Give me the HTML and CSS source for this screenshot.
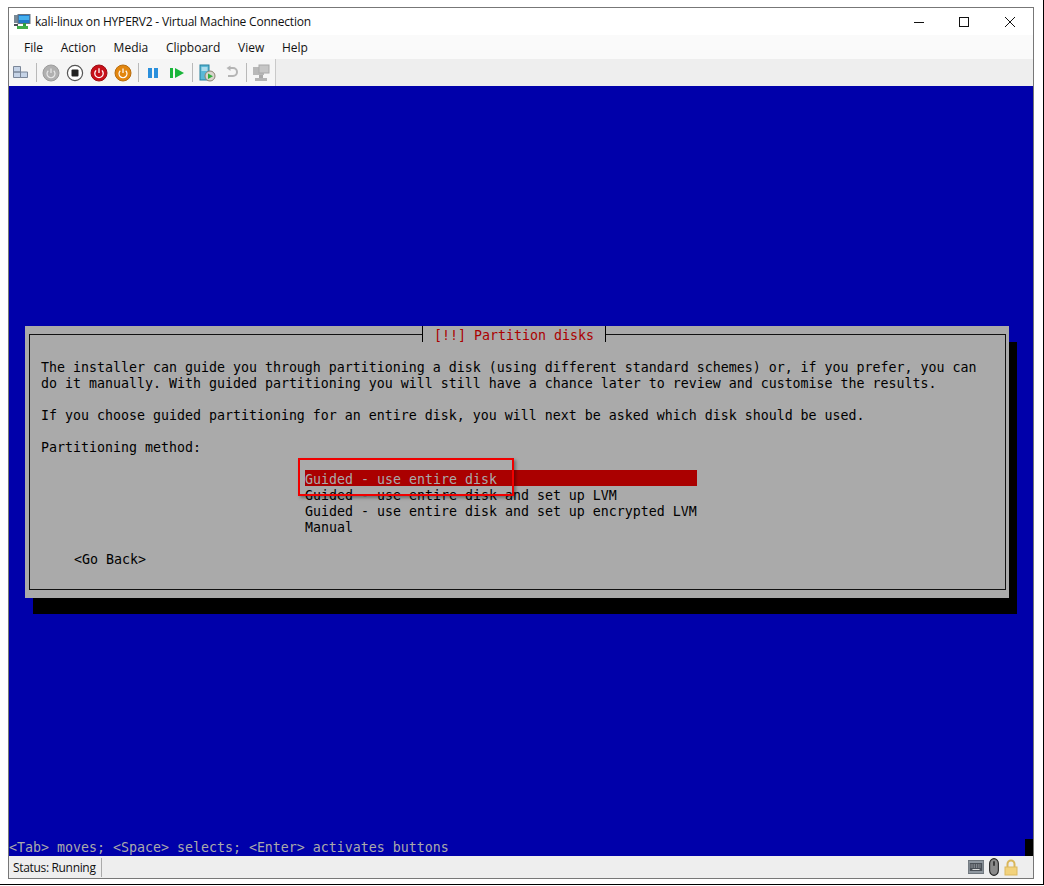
FILE: index.html
```html
<!DOCTYPE html>
<html lang="en">
<head>
<meta charset="utf-8">
<title>kali-linux on HYPERV2 - Virtual Machine Connection</title>
<link rel="stylesheet" href="styles.css">
</head>
<body>
<div class="window">
  <header class="titlebar">
    <svg class="app-icon" width="17" height="16" viewBox="0 0 17 16">
      <rect x="0" y="1" width="6" height="8" fill="#7a8a96"/>
      <rect x="4" y="0.5" width="12" height="9" fill="#1f78c8" stroke="#6c7680"/>
      <rect x="5" y="2" width="10" height="4" fill="#45b0ee"/>
      <rect x="9" y="9" width="3" height="3" fill="#2f9e3f"/>
      <rect x="3" y="12" width="11" height="3" fill="#3fae4a"/>
      <rect x="0" y="10" width="4" height="2" fill="#4a4f55"/>
    </svg>
    <span class="title">kali-linux on HYPERV2 - Virtual Machine Connection</span>
    <div class="controls">
      <svg class="minimize" width="10" height="10" viewBox="0 0 10 10"><path d="M0 5.5H10" stroke="#111" stroke-width="1"/></svg>
      <svg width="10" height="10" viewBox="0 0 10 10"><rect x="0.5" y="0.5" width="9" height="9" fill="none" stroke="#111"/></svg>
      <svg width="10" height="10" viewBox="0 0 10 10"><path d="M0 0L10 10M10 0L0 10" stroke="#111" stroke-width="1"/></svg>
    </div>
  </header>
  <nav class="menubar">
    <span>File</span><span>Action</span><span>Media</span><span>Clipboard</span><span>View</span><span>Help</span>
  </nav>
  <div class="toolstrip">
    <div class="tools">
      <svg class="tool" viewBox="0 0 18 18"><path d="M1.5 2.5h7v5.5h-7zM1.5 8h7v5.5h-7zM8.5 8h7v5.5h-7z" fill="#c5d3e6" stroke="#7b8698"/></svg>
      <i class="sep"></i>
      <svg class="tool" viewBox="0 0 18 18"><circle cx="9" cy="9" r="8" fill="#b0b0b0" stroke="#9c9c9c"/><path d="M6.3 6.8a4 4 0 1 0 5.4 0M9 4.5v4.5" fill="none" stroke="#e8e8e8" stroke-width="1.2"/></svg>
      <svg class="tool" viewBox="0 0 18 18"><circle cx="9" cy="9" r="7.6" fill="#fff" stroke="#555" stroke-width="1.2"/><rect x="5.5" y="5.5" width="7" height="7" rx="1" fill="#222"/></svg>
      <svg class="tool" viewBox="0 0 18 18"><circle cx="9" cy="9" r="8" fill="#c8101a" stroke="#9c1016"/><path d="M6.1 6.4a4.2 4.2 0 1 0 5.8 0M9 4.2v4.8" fill="none" stroke="#fff" stroke-width="1.3"/></svg>
      <svg class="tool" viewBox="0 0 18 18"><circle cx="9" cy="9" r="8" fill="#e2860f" stroke="#b86c0c"/><path d="M6.3 6.8a4 4 0 1 0 5.4 0M9 4.5v4.5" fill="none" stroke="#fff" stroke-width="1.2"/></svg>
      <i class="sep"></i>
      <svg class="tool" viewBox="0 0 18 18"><rect x="4" y="4" width="4" height="10" fill="#2a8fdc"/><rect x="10" y="4" width="4" height="10" fill="#2a8fdc"/></svg>
      <svg class="tool" viewBox="0 0 18 18"><rect x="2" y="4" width="3" height="10" fill="#19b53a"/><path d="M7 4l9 5-9 5z" fill="#19b53a"/></svg>
      <i class="sep"></i>
      <svg class="tool" viewBox="0 0 18 18"><rect x="2" y="1" width="9" height="15" fill="#5ab8d6" stroke="#257f9c"/><path d="M3.5 4h6M3.5 6h6" stroke="#fff"/><circle cx="12" cy="12" r="5" fill="#d9d5cd" stroke="#8a8172"/><path d="M10 9.5l5 2.8-5 2.8z" fill="#2fae3d"/></svg>
      <svg class="tool" viewBox="0 0 18 18"><path d="M8 4H11a3.5 3.5 0 0 1 0 8H6" fill="none" stroke="#b5b5b5" stroke-width="2"/><path d="M8.5 1.5L4.5 4l4 3z" fill="#b5b5b5"/></svg>
      <i class="sep"></i>
      <svg class="tool" viewBox="0 0 18 18"><rect x="1" y="3" width="11" height="8" fill="#b8b8b8"/><rect x="7" y="1" width="10" height="8" fill="#c6c6c6" stroke="#a8a8a8"/><rect x="7" y="11" width="4" height="3" fill="#a9a9a9"/><rect x="3" y="14" width="12" height="3" fill="#b4b4b4"/></svg>
    </div>
  </div>
  <main class="screen">
    <section class="dialog">
      <div class="frame">
        <h1 class="dialog-title"><span>[!!] Partition disks</span></h1>
        <p class="line top-line">The installer can guide you through partitioning a disk (using different standard schemes) or, if you prefer, you can</p>
        <p class="line">do it manually. With guided partitioning you will still have a chance later to review and customise the results.</p>
        <p class="line gap">If you choose guided partitioning for an entire disk, you will next be asked which disk should be used.</p>
        <p class="line gap">Partitioning method:</p>
        <ul class="options">
          <li class="selected">Guided - use entire disk</li>
          <li>Guided - use entire disk and set up LVM</li>
          <li>Guided - use entire disk and set up encrypted LVM</li>
          <li>Manual</li>
        </ul>
        <p class="line back">&lt;Go Back&gt;</p>
      </div>
      <div class="callout"></div>
    </section>
    <div class="hint"><span>&lt;Tab&gt; moves; &lt;Space&gt; selects; &lt;Enter&gt; activates buttons</span><i class="cursor"></i></div>
  </main>
  <footer class="statusbar">
    <span class="status">Status: Running</span>
    <div class="tray">
      <svg width="16" height="14" viewBox="0 0 18 14" preserveAspectRatio="none"><rect x="0.5" y="0.5" width="17" height="13" fill="#8f979f" stroke="#6d747b"/><rect x="2" y="3" width="14" height="8" fill="#4a5057"/><path d="M3 5h12M3 7h12" stroke="#d4d8dc" stroke-dasharray="1 1"/><path d="M5 9.5h8" stroke="#e4e4e4"/></svg>
      <svg width="10" height="18" viewBox="0 0 11 18" preserveAspectRatio="none"><rect x="0.7" y="0.7" width="9.6" height="16.6" rx="4.8" fill="#8a8a8a" stroke="#222" stroke-width="1.2"/><rect x="4.5" y="3" width="2" height="5" rx="1" fill="#333"/></svg>
      <svg width="14" height="17" viewBox="0 0 14 17"><path d="M3.5 8V5a3.5 3.5 0 0 1 7 0v3" fill="none" stroke="#d9b65a" stroke-width="2"/><rect x="1" y="8" width="12" height="8" fill="#f2d27c" stroke="#dcb85f"/></svg>
    </div>
  </footer>
</div>
</body>
</html>
```

FILE: styles.css
```css
* { box-sizing: border-box; }
html { margin: 0; height: 100%; background: #fff; }
body {
  margin: 0; width: 1044px; height: 885px; padding: 7px 9px 0 8px;
  border-right: 1px solid #000; border-bottom: 1px solid #000;
  font-family: "Open Sans", "Liberation Sans", sans-serif; color: #111;
}
.window {
  width: 1026px;
  height: 872px;
  border: 1px solid #777;
  display: flex;
  flex-direction: column;
  background: #fff;
}
.titlebar { height: 27px; display: flex; align-items: center; padding-left: 5px; flex: none; }
.app-icon { margin-right: 4px; }
.title { font-size: 12px; letter-spacing: -0.2px; }
.controls { margin-left: auto; display: flex; gap: 36px; padding-right: 18px; }
.minimize { margin-right: -1px; }
.menubar {
  height: 24px; flex: none; display: flex; align-items: center; gap: 17.7px;
  padding-left: 15px; font-size: 12px; background: #fafafa;
}
.toolstrip { height: 27px; flex: none; background: #eeeeee; }
.tools {
  width: 267px; height: 27px; display: flex; align-items: center; gap: 6px; padding-left: 3px;
  background: #f5f5f5; border-right: 1px solid #c9c9c9;
}
.tool { width: 18px; height: 18px; flex: none; }
.sep { width: 1px; height: 19px; margin: 0 -0.5px; background: #b9b9b9; flex: none; }
.screen {
  position: relative; flex: 1; background: #0000aa; display: flex; flex-direction: column;
  font-family: "DejaVu Sans Mono", "Liberation Mono", monospace; font-size: 13.29px; line-height: 20px;
}
.dialog {
  position: relative; width: 984px; height: 272px; margin: 240px 0 0 16px;
  background: #aaaaaa; box-shadow: 8px 16px 0 #000; padding: 8px 3px 8px 4px;
}
.frame { position: relative; height: 100%; border: 1px solid #111; padding: 0 11px; color: #000; }
.dialog-title {
  position: absolute; top: -9px; left: 392px; margin: 0; height: 16px; padding: 0 11px;
  background: #aaaaaa; border: solid #000; border-width: 0 1px; font: inherit; color: #aa0000;
}
.line { margin: 0; white-space: pre; height: 16px; }
.top-line { margin-top: 23px; }
.gap { margin-top: 16px; }
.options { list-style: none; margin: 16px 0 0 264px; padding: 0; width: 392px; }
.options li { height: 16px; white-space: pre; }
.options .selected { background: #aa0000; color: #aaaaaa; }
.back { margin: 16px 0 0 33px; }
.callout {
  position: absolute; left: 273px; top: 132px; width: 216px; height: 38px;
  border: 2px solid #f00000; box-shadow: 2px 2px 3px rgba(0,0,0,0.35);
}
.hint {
  position: relative; margin-top: auto; height: 17px; line-height: 18px; background: #0000aa; color: #aaaaaa; white-space: pre; display: flex;
}
.cursor { position: absolute; right: 0; bottom: 0; width: 8px; height: 17px; background: #000; }
.statusbar {
  height: 22px; flex: none; display: flex; align-items: center; background: #eeeeee; font-size: 12px;
}
.status { padding: 0 5px 0 4px; height: 19px; line-height: 19px; border-right: 1px solid #aaa; letter-spacing: -0.33px; }
.tray { margin-left: auto; display: flex; align-items: center; gap: 5px; padding-right: 15px; }
```
